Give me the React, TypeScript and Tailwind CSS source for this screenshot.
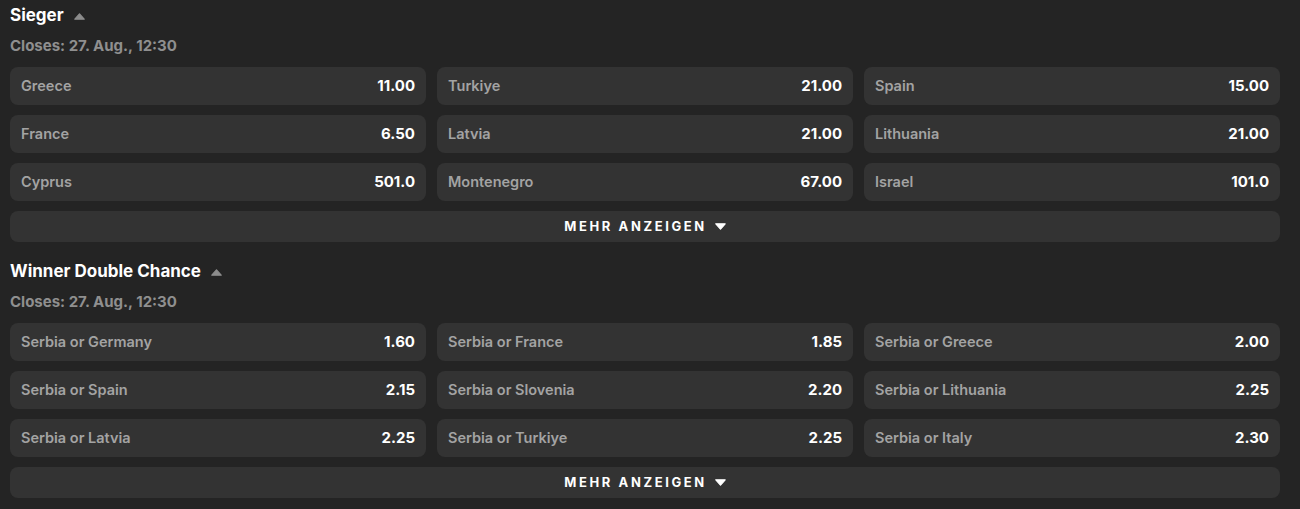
type Odd = { label: string; price: string };

const markets: { title: string; closes: string; odds: Odd[] }[] = [
  {
    title: "Sieger",
    closes: "Closes: 27. Aug., 12:30",
    odds: [
      { label: "Greece", price: "11.00" },
      { label: "Turkiye", price: "21.00" },
      { label: "Spain", price: "15.00" },
      { label: "France", price: "6.50" },
      { label: "Latvia", price: "21.00" },
      { label: "Lithuania", price: "21.00" },
      { label: "Cyprus", price: "501.0" },
      { label: "Montenegro", price: "67.00" },
      { label: "Israel", price: "101.0" },
    ],
  },
  {
    title: "Winner Double Chance",
    closes: "Closes: 27. Aug., 12:30",
    odds: [
      { label: "Serbia or Germany", price: "1.60" },
      { label: "Serbia or France", price: "1.85" },
      { label: "Serbia or Greece", price: "2.00" },
      { label: "Serbia or Spain", price: "2.15" },
      { label: "Serbia or Slovenia", price: "2.20" },
      { label: "Serbia or Lithuania", price: "2.25" },
      { label: "Serbia or Latvia", price: "2.25" },
      { label: "Serbia or Turkiye", price: "2.25" },
      { label: "Serbia or Italy", price: "2.30" },
    ],
  },
];

const Caret = ({ up, className }: { up?: boolean; className?: string }) => (
  <svg width="11" height="7" viewBox="0 0 11 7" className={className}>
    <path
      d={up ? "M5.5 0.8 L10.2 6.2 L0.8 6.2 Z" : "M0.8 0.8 L10.2 0.8 L5.5 6.2 Z"}
      fill="currentColor"
      stroke="currentColor"
      strokeWidth="1.2"
      strokeLinejoin="round"
    />
  </svg>
);

const Market = ({ title, closes, odds }: (typeof markets)[number]) => (
  <section className="flex flex-col">
    <div className="flex items-center gap-[10px] h-6">
      <h2 className="text-[17px] font-bold text-white">{title}</h2>
      <Caret up className="text-[#8c8c8c]" />
    </div>
    <p className="mt-2 h-5 leading-5 text-[15px] font-bold text-[#8f8f8f]">{closes}</p>
    <div className="mt-[11px] grid grid-cols-3 gap-x-[11px] gap-y-[10px]">
      {odds.map((o) => (
        <button
          key={o.label}
          className="flex h-[38px] items-center justify-between rounded-lg bg-[#333333] px-[11px] text-[14.5px] font-semibold"
        >
          <span className="text-[#a3a3a3]">{o.label}</span>
          <span className="text-[15px] font-bold text-white">{o.price}</span>
        </button>
      ))}
    </div>
    <button className="mt-[10px] flex h-[31px] items-center justify-center gap-2 rounded-lg bg-[#333333] text-[13px] font-bold tracking-[0.2em] text-white">
      MEHR ANZEIGEN
      <Caret className="text-white" />
    </button>
  </section>
);

const App = () => {
  return (
    <div
      className="flex h-[509px] w-full flex-col gap-[18px] bg-[#242424] pt-1 pl-[10px] pr-[20px]"
      style={{ fontFamily: "Inter, 'Liberation Sans', sans-serif" }}
    >
      {markets.map((m) => (
        <Market key={m.title} {...m} />
      ))}
    </div>
  );
};

export default App;
